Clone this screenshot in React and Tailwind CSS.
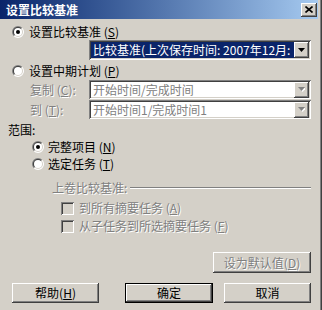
import React from 'react';

const raised =
  'shadow-[inset_-1px_-1px_#404040,inset_1px_1px_#ffffff,inset_-2px_-2px_#808080,inset_2px_2px_#d4d0c8]';
const sunken =
  'shadow-[inset_1px_1px_#808080,inset_-1px_-1px_#ffffff,inset_2px_2px_#404040,inset_-2px_-2px_#d4d0c8]';
const dim = 'text-[#808080] [text-shadow:1px_1px_0_#ffffff]';

// classic sunken radio button
const Radio = ({ checked }) => (
  <svg width="12" height="12" viewBox="0 0 12 12" className="shrink-0">
    <path d="M1.757 10.243A6 6 0 0 1 10.243 1.757Z" fill="#808080" />
    <path d="M1.757 10.243A6 6 0 0 0 10.243 1.757Z" fill="#ffffff" />
    <path d="M2.464 9.536A5 5 0 0 1 9.536 2.464Z" fill="#404040" />
    <path d="M2.464 9.536A5 5 0 0 0 9.536 2.464Z" fill="#d4d0c8" />
    <circle cx="6" cy="6" r="4" fill="#ffffff" />
    {checked && <circle cx="6" cy="6" r="2" fill="#000000" />}
  </svg>
);

const Check = () => <div className={`w-[13px] h-[13px] shrink-0 bg-[#d4d0c8] ${sunken}`} />;

const Key = ({ k }) => (
  <span>
    {' '}(<u>{k}</u>)
  </span>
);

const Arrow = ({ disabled }) => (
  <div className={`w-[15px] h-[16px] bg-[#d4d0c8] flex items-center justify-center ${raised}`}>
    <svg width="7" height="5" viewBox="0 0 7 5">
      {disabled && <path d="M1 1h7L4.5 5Z" fill="#ffffff" />}
      <path d="M0 0h7L3.5 4Z" fill={disabled ? '#808080' : '#000000'} />
    </svg>
  </div>
);

const Combo = ({ children, disabled, selected }) => (
  <div className={`w-[222px] bg-white flex items-center p-[2px] ${sunken} ${selected ? 'h-[20px]' : 'h-[19px]'}`}>
    <div
      className={`flex-1 h-full overflow-hidden whitespace-nowrap flex items-center pl-[2px] ${
        selected ? 'bg-[#0a246a] text-white' : disabled ? 'text-[#808080]' : 'text-black'
      }`}
    >
      {children}
    </div>
    <Arrow disabled={disabled} />
  </div>
);

const Button = ({ children, disabled, primary, w = 'w-[87px]', h = 'h-[20px]' }) => (
  <div className={`${w} ${h} ${primary ? 'border border-black' : ''}`}>
    <div className={`w-full h-full bg-[#d4d0c8] flex items-center justify-center ${raised} ${disabled ? dim : 'text-black'}`}>
      {children}
    </div>
  </div>
);

export default function App() {
  return (
    <div
      className="w-[322px] h-[310px] bg-[#d4d0c8] text-[12px] leading-[14px] text-black overflow-hidden shadow-[inset_-1px_0_#404040,inset_-2px_0_#808080]"
      style={{ fontFamily: '"Noto Sans CJK SC", "Liberation Sans", sans-serif' }}
    >
      {/* Title bar */}
      <div className="w-[318px] h-[19px] bg-gradient-to-r from-[#0a246a] to-[#a6caf0] flex items-center justify-between pl-[6px] pr-[1px]">
        <span className="text-white font-bold text-[12px]">设置比较基准</span>
        <div className={`w-[16px] h-[14px] bg-[#d4d0c8] flex items-center justify-center ${raised}`}>
          <svg width="8" height="7" viewBox="0 0 8 7">
            <path d="M0.5 0.5L7.5 6.5M7.5 0.5L0.5 6.5" stroke="#000" strokeWidth="1.6" />
          </svg>
        </div>
      </div>

      <div className="flex flex-col">
        <div className="h-[16px] mt-[5px] ml-[12px] flex items-center gap-[5px]">
          <Radio checked />
          <span>设置比较基准<Key k="S" /></span>
        </div>
        <div className="ml-[89px]">
          <Combo selected>比较基准(上次保存时间: 2007年12月:</Combo>
        </div>

        <div className="h-[16px] mt-[3px] ml-[12px] flex items-center gap-[5px]">
          <Radio />
          <span>设置中期计划<Key k="P" /></span>
        </div>
        <div className="mt-[1px] ml-[30px] flex items-center">
          <span className={`w-[59px] ${dim}`}>复制<Key k="C" />:</span>
          <Combo disabled>开始时间/完成时间</Combo>
        </div>
        <div className="mt-[1px] ml-[30px] flex items-center">
          <span className={`w-[59px] ${dim}`}>到<Key k="T" />:</span>
          <Combo disabled>开始时间1/完成时间1</Combo>
        </div>

        <div className="h-[16px] mt-[3px] ml-[8px] flex items-center">范围:</div>
        <div className="h-[16px] mt-[1px] ml-[32px] flex items-center gap-[4px]">
          <Radio checked />
          <span>完整项目<Key k="N" /></span>
        </div>
        <div className="h-[16px] mt-[1px] ml-[32px] flex items-center gap-[4px]">
          <Radio />
          <span>选定任务<Key k="T" /></span>
        </div>

        <div className="h-[16px] mt-[8px] ml-[52px] mr-[11px] flex items-center">
          <span className={dim}>上卷比较基准:</span>
          <div className="flex-1 ml-[3px] h-[2px] border-t border-b border-t-[#808080] border-b-white" />
        </div>
        <div className="h-[16px] mt-[4px] ml-[61px] flex items-center gap-[5px]">
          <Check />
          <span className={dim}>到所有摘要任务<Key k="A" /></span>
        </div>
        <div className="h-[16px] mt-[2px] ml-[61px] flex items-center gap-[5px]">
          <Check />
          <span className={dim}>从子任务到所选摘要任务<Key k="F" /></span>
        </div>

        <div className="mt-[18px] ml-[213px]">
          <Button disabled w="w-[98px]" h="h-[21px]">
            设为默认值<Key k="D" />
          </Button>
        </div>

        <div className="mt-[10px] ml-[12px] flex items-center">
          <Button>
            帮助<Key k="H" />
          </Button>
          <div className="ml-[26px]">
            <Button primary w="w-[88px]">确定</Button>
          </div>
          <div className="ml-[11px]">
            <Button>取消</Button>
          </div>
        </div>
      </div>
    </div>
  );
}
